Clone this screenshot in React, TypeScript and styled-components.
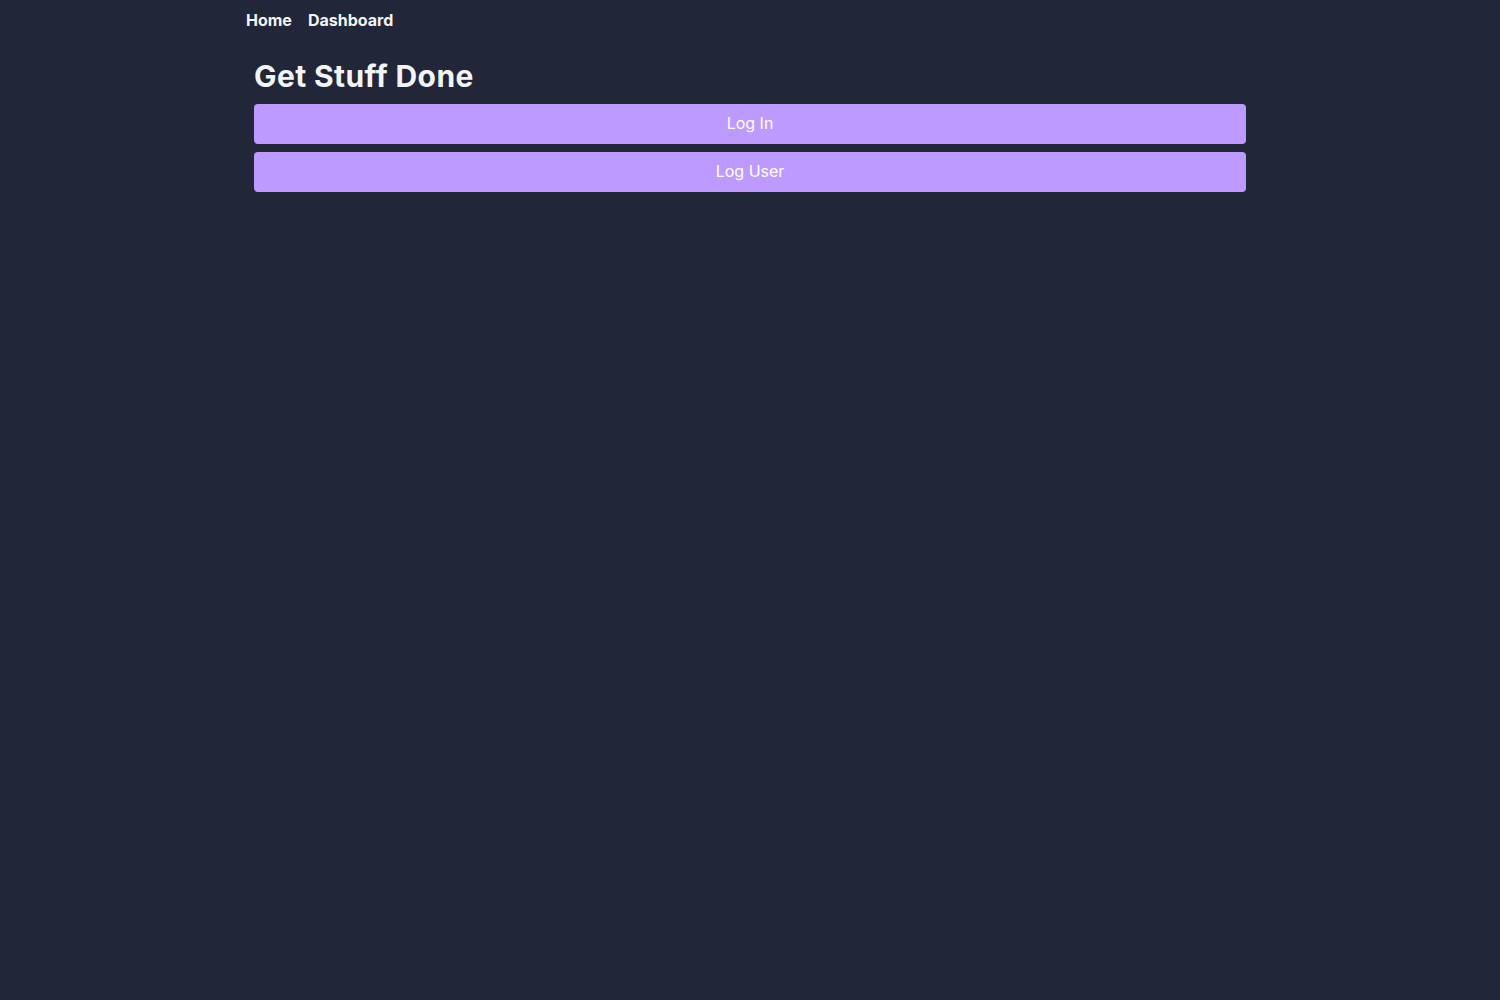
import React from "react";
import styled, { createGlobalStyle } from "styled-components";

const Global = createGlobalStyle`
  html, body { margin: 0; padding: 0; background: #222639; }
  body { font-family: Inter, "Noto Sans", sans-serif; color: #f3f4f6; min-height: 100vh; }
  * { box-sizing: border-box; }
`;

const Shell = styled.div`
  max-width: 1024px;
  margin: 0 auto;
`;

const Nav = styled.nav`
  display: flex;
  gap: 16px;
  padding: 10px 8px;
`;

const NavLink = styled.a`
  color: #f3f4f6;
  font-weight: 700;
  font-size: 16px;
  line-height: 20px;
  text-decoration: none;
`;

const Main = styled.main`
  padding: 17px 16px 8px;
  display: flex;
  flex-direction: column;
  gap: 8px;
`;

const Title = styled.h1`
  margin: 0;
  font-size: 30px;
  line-height: 39px;
  font-weight: 700;
  letter-spacing: 0.4px;
  color: #f3f4f6;
`;

const Button = styled.button`
  height: 40px;
  width: 100%;
  border: none;
  border-radius: 4px;
  background: #bd9aff;
  color: #ffffff;
  font-family: Inter, "Noto Sans", sans-serif;
  font-size: 16px;
  font-weight: 400;
  line-height: 20px;
  padding: 0 0 2px;
`;

export default function App() {
  return (
    <>
      <Global />
      <Shell>
        <Nav>
          <NavLink href="#">Home</NavLink>
          <NavLink href="#">Dashboard</NavLink>
        </Nav>
        <Main>
          <Title>Get Stuff Done</Title>
          <Button>Log In</Button>
          <Button>Log User</Button>
        </Main>
      </Shell>
    </>
  );
}
